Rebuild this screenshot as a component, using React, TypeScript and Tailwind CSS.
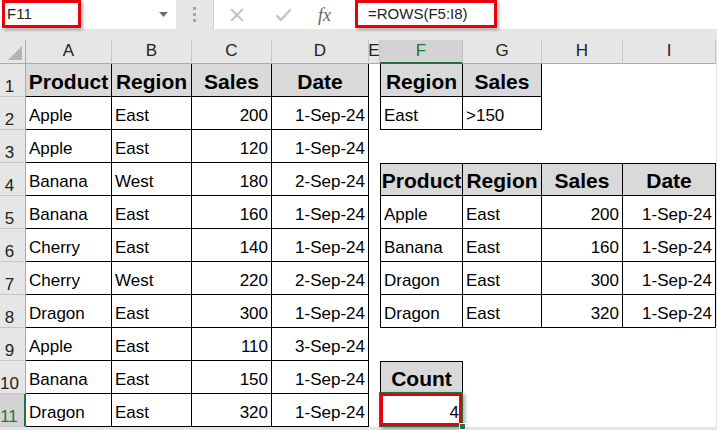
import React from "react";

type Table = { r0: number; r1: number; c0: number; c1: number };

const colLetters = ["A", "B", "C", "D", "E", "F", "G", "H", "I"];

// tables on the sheet (1-based rows, 1-based column index A=1)
const tables: Table[] = [
  { r0: 1, r1: 11, c0: 1, c1: 4 },
  { r0: 1, r1: 2, c0: 6, c1: 7 },
  { r0: 4, r1: 8, c0: 6, c1: 9 },
  { r0: 10, r1: 11, c0: 6, c1: 6 },
];

const headerCells = new Set(["1-1", "1-2", "1-3", "1-4", "1-6", "1-7", "4-6", "4-7", "4-8", "4-9", "10-6"]);

const values: Record<string, string> = {};
const put = (r: number, c: number, row: string[]) => row.forEach((v, i) => (values[`${r}-${c + i}`] = v));

put(1, 1, ["Product", "Region", "Sales", "Date"]);
const leftRows = [
  ["Apple", "East", "200", "1-Sep-24"],
  ["Apple", "East", "120", "1-Sep-24"],
  ["Banana", "West", "180", "2-Sep-24"],
  ["Banana", "East", "160", "1-Sep-24"],
  ["Cherry", "East", "140", "1-Sep-24"],
  ["Cherry", "West", "220", "2-Sep-24"],
  ["Dragon", "East", "300", "1-Sep-24"],
  ["Apple", "East", "110", "3-Sep-24"],
  ["Banana", "East", "150", "1-Sep-24"],
  ["Dragon", "East", "320", "1-Sep-24"],
];
leftRows.forEach((row, i) => put(i + 2, 1, row));
put(1, 6, ["Region", "Sales"]);
put(2, 6, ["East", ">150"]);
put(4, 6, ["Product", "Region", "Sales", "Date"]);
put(5, 6, ["Apple", "East", "200", "1-Sep-24"]);
put(6, 6, ["Banana", "East", "160", "1-Sep-24"]);
put(7, 6, ["Dragon", "East", "300", "1-Sep-24"]);
put(8, 6, ["Dragon", "East", "320", "1-Sep-24"]);
put(10, 6, ["Count"]);
put(11, 6, ["4"]);

const isRight = (v: string) => /^\d/.test(v);

function SheetCell({ r, c }: { r: number; c: number }) {
  const key = `${r}-${c}`;
  const v = values[key] ?? "";
  const t = tables.find((t) => r >= t.r0 && r <= t.r1 && c >= t.c0 && c <= t.c1);
  const head = headerCells.has(key);
  const selected = r === 11 && c === 6;

  let cls = "relative flex items-end overflow-visible whitespace-nowrap ";
  if (t) {
    cls += "border-r border-b border-black ";
    if (c === t.c0 && c !== 1) cls += "border-l ";
    if (r === t.r0 && r !== 1) cls += "border-t ";
  }
  if (head) {
    cls += "bg-[#d9d9d9] justify-center font-bold text-[21px] leading-[24px] pb-[2px] ";
  } else {
    cls += "bg-white text-[17px] leading-[19px] pb-[4px] ";
    cls += isRight(v) ? "justify-end pr-[3px] " : "justify-start pl-[3px] ";
  }

  return (
    <div className={cls}>
      <span className="relative z-20 text-black">{v}</span>
      {selected && (
        <>
          <div className="absolute -left-[2px] -top-[2px] -right-[1px] -bottom-[1px] z-10 border-2 border-[#217346] shadow-[2px_2px_4px_rgba(0,0,0,0.35)]" />
          <div className="absolute -left-[1px] -top-[1px] right-0 bottom-0 z-10 border-[3px] border-[#e8000b]" />
          <div className="absolute -right-[4px] -bottom-[4px] z-10 w-[7px] h-[7px] bg-[#217346] border border-white" />
        </>
      )}
    </div>
  );
}

function TopBar() {
  return (
    <div className="h-[40px] flex items-start bg-[#e6e6e6]">
      <div className="relative w-[176px] h-[29px] bg-white flex items-center pl-[7px] text-[15px] text-[#222]">
        <span className="relative z-10">F11</span>
        <svg className="absolute left-[159px] top-[12px]" width="9" height="5" viewBox="0 0 9 5">
          <polygon points="0,0 9,0 4.5,5" fill="#6d6d6d" />
        </svg>
        <div className="absolute left-[2px] top-0 w-[79px] h-[28px] border-[3px] border-[#e8000b] shadow-[2px_2px_3px_rgba(0,0,0,0.3)]" />
      </div>
      <div className="w-[37px] h-[29px] flex flex-col items-center justify-center gap-[3px]">
        <span className="w-[3px] h-[3px] bg-[#a5a5a5]" />
        <span className="w-[3px] h-[3px] bg-[#a5a5a5]" />
        <span className="w-[3px] h-[3px] bg-[#a5a5a5]" />
      </div>
      <div className="relative flex-1 h-[29px] bg-white border-l border-[#d0d0d0] flex items-center">
        <div className="w-[137px] flex items-center">
          <svg className="ml-[15px]" width="16" height="16" viewBox="0 0 16 16">
            <path d="M2 2 L14 14 M14 2 L2 14" stroke="#c3c3c3" strokeWidth="2" fill="none" />
          </svg>
          <svg className="ml-[30px]" width="17" height="16" viewBox="0 0 17 16">
            <path d="M1.5 8.5 L6 13 L15.5 2.5" stroke="#c3c3c3" strokeWidth="2.4" fill="none" />
          </svg>
          <span className="ml-[26px] font-['Liberation_Serif',serif] italic text-[18px] text-[#666] leading-none">
            fx
          </span>
        </div>
        <span className="ml-[17px] text-[15px] text-[#222] relative z-10">=ROWS(F5:I8)</span>
        <div className="absolute left-[141px] top-0 w-[142px] h-[28px] border-[3px] border-[#e8000b] shadow-[2px_2px_3px_rgba(0,0,0,0.3)]" />
      </div>
    </div>
  );
}

export default function App() {
  const rows = Array.from({ length: 11 }, (_, i) => i + 1);
  return (
    <div className="w-[717px] h-[430px] overflow-hidden bg-[#e6e6e6] font-['Liberation_Sans',Arial,sans-serif]">
      <TopBar />
      <div className="grid grid-cols-[26px_86px_80px_80px_97px_11px_83px_79px_81px_93px] grid-rows-[24px_repeat(11,33px)]">
        {/* corner */}
        <div className="relative bg-[#e6e6e6] border-r border-b border-[#ababab]">
          <svg className="absolute left-[7px] top-[5px]" width="16" height="16" viewBox="0 0 16 16">
            <polygon points="1,15 15,15 15,1" fill="#b4b4b4" />
          </svg>
        </div>
        {colLetters.map((l) =>
          l === "F" ? (
            <div
              key={l}
              className="flex items-end justify-center pb-[2px] bg-[#d3d3d3] border-r border-[#c0c0c0] border-b-2 border-b-[#217346] text-[17px] leading-[19px] text-[#217346]"
            >
              {l}
            </div>
          ) : (
            <div
              key={l}
              className="flex items-end justify-center pb-[3px] bg-[#e6e6e6] border-r border-[#c6c6c6] border-b border-b-[#ababab] text-[17px] leading-[19px] text-[#222]"
            >
              {l}
            </div>
          )
        )}
        {rows.map((r) => (
          <React.Fragment key={r}>
            {r === 11 ? (
              <div className="flex items-end justify-center pr-[6px] bg-[#d3d3d3] border-b border-[#c6c6c6] border-r-2 border-r-[#217346] text-[17px] leading-[19px] text-[#217346]">
                {r}
              </div>
            ) : (
              <div className="flex items-end justify-center pr-[6px] bg-[#e6e6e6] border-b border-[#c6c6c6] border-r border-r-[#ababab] text-[17px] leading-[19px] text-[#222]">
                {r}
              </div>
            )}
            {colLetters.map((_, ci) => (
              <SheetCell key={ci} r={r} c={ci + 1} />
            ))}
          </React.Fragment>
        ))}
      </div>
    </div>
  );
}
